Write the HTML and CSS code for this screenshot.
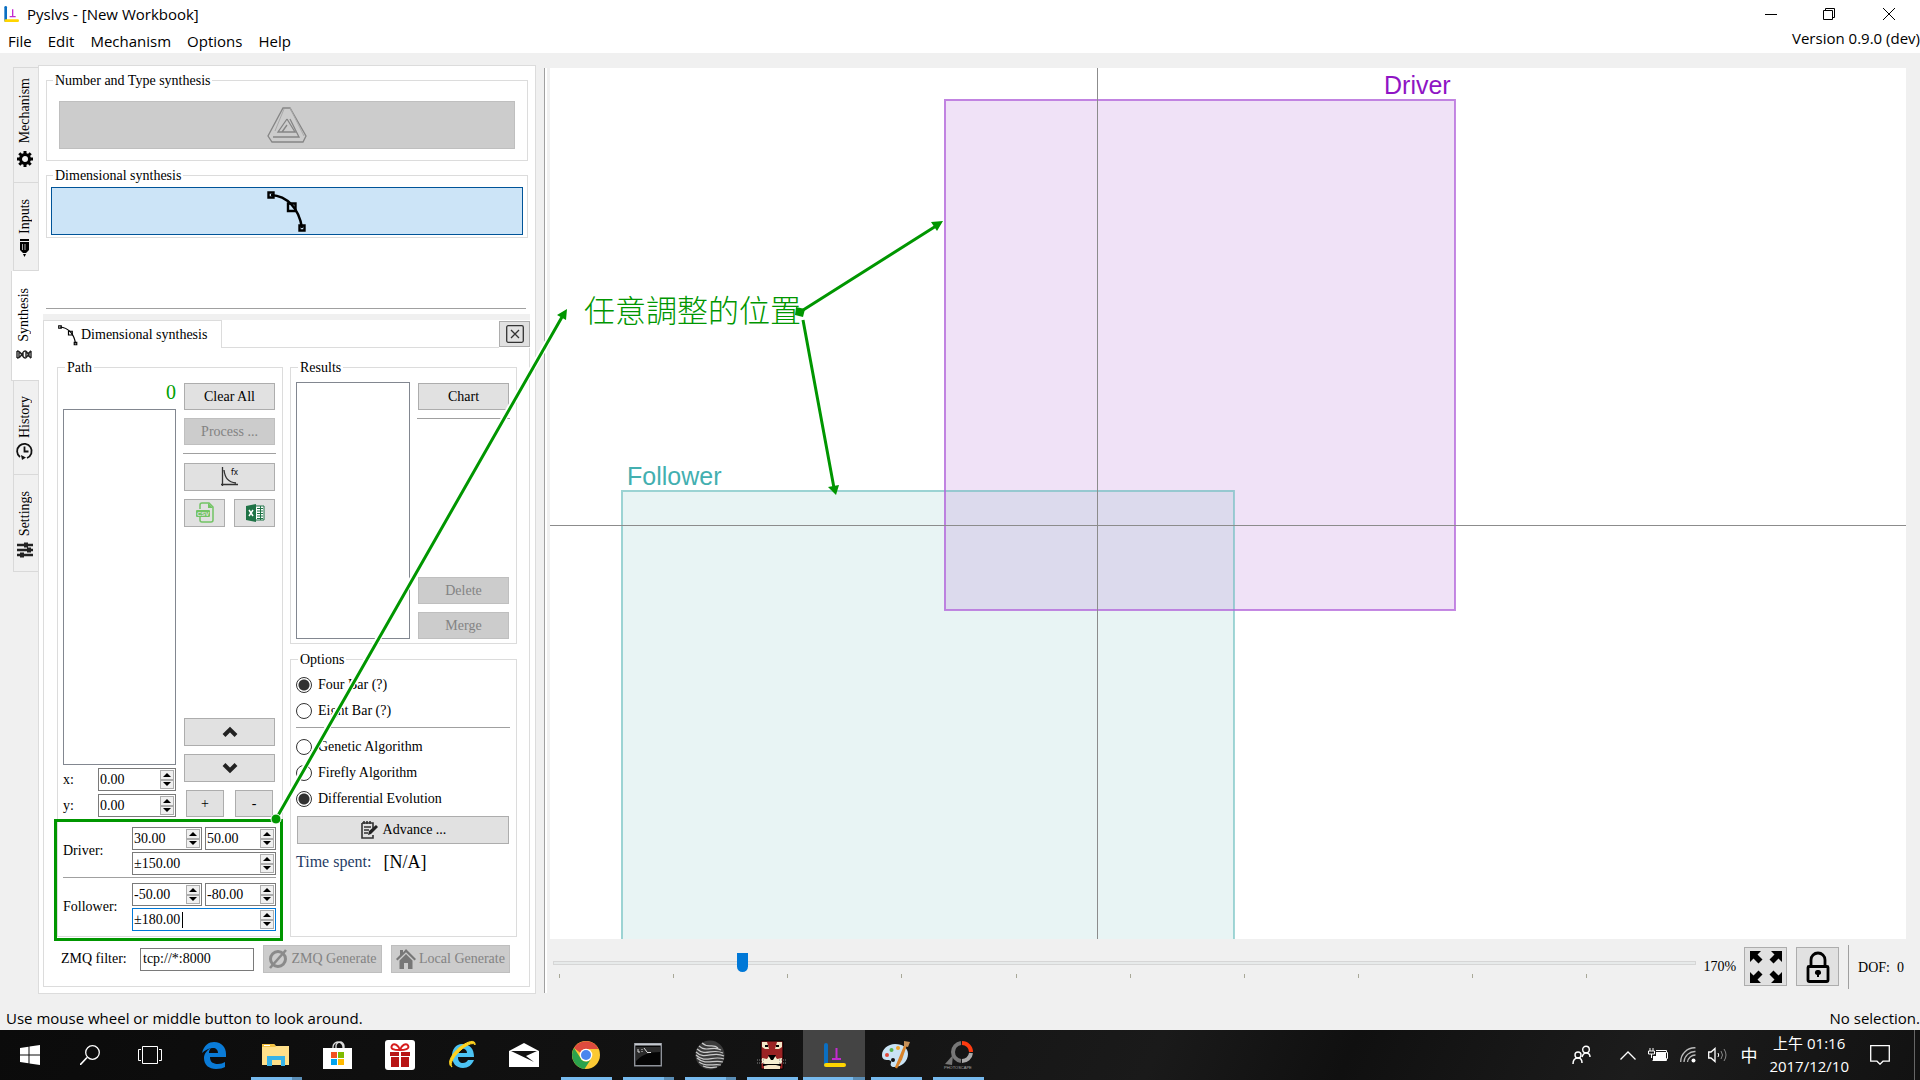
FILE: index.html
```html
<!DOCTYPE html>
<html lang="en">
<head>
<meta charset="utf-8">
<title>Pyslvs - [New Workbook]</title>
<link rel="stylesheet" href="styles.css">
</head>
<body>
<svg class="defs" aria-hidden="true">
  <symbol id="curve" viewBox="0 0 40 42">
    <path d="M4 5C20 6 32 18 35 38" fill="none" stroke="currentColor" stroke-width="2.4"/>
    <g fill="none" stroke="currentColor" stroke-width="2.4"><path d="M1.500 2.500h5v5h-5zM32.500 35.500h5v5h-5zM21 13.500h7.500v7.500h-7.500z"/></g>
  </symbol>
  <symbol id="pyslvs" viewBox="0 0 24 26">
    <path d="M4 3v20" stroke="#0b6fc2" stroke-width="4" stroke-linecap="round"/>
    <path d="M4 23h18" stroke="#ffd500" stroke-width="4" stroke-linecap="round"/>
    <path d="M14.500 6v10M10 17h9" stroke="#c32bd0" stroke-width="2"/>
  </symbol>
</svg>
<div class="app">
  <header class="titlebar">
    <svg class="app-icon" viewBox="0 0 24 26"><use href="#pyslvs"/></svg>
    <h1>Pyslvs - [New Workbook]</h1>
    <div class="window-buttons">
      <button aria-label="Minimize"><svg viewBox="0 0 12 12"><path d="M0 6.500h12"/></svg></button>
      <button aria-label="Restore"><svg viewBox="0 0 12 12"><path d="M.5 2.500h9v9h-9zM2.500 2.500v-2h9v9h-2"/></svg></button>
      <button aria-label="Close"><svg viewBox="0 0 12 12"><path d="M0 0l12 12M12 0L0 12"/></svg></button>
    </div>
  </header>
  <nav class="menubar">
    <button>File</button><button>Edit</button><button>Mechanism</button><button>Options</button><button>Help</button>
    <span class="version">Version 0.9.0 (dev)</span>
  </nav>

  <main class="workspace">
    <nav class="side-tabs">
      <button class="side-tab tab-mechanism"><span>Mechanism</span><svg viewBox="0 0 16 16"><circle cx="8" cy="8" r="4.500" fill="none" stroke="#000" stroke-width="3"/><path d="M8 0v3M8 13v3M0 8h3M13 8h3M2.300 2.300l2 2M11.700 11.700l2 2M13.700 2.300l-2 2M2.300 13.700l2-2" stroke="#000" stroke-width="3"/></svg></button>
      <button class="side-tab tab-inputs"><span>Inputs</span><svg viewBox="0 0 16 20"><path d="M3 1h9v2H3zM3 4h9v8l-3 3H6l-3-3z" fill="#000"/><path d="M5.500 6v6M8 6v6" stroke="#aaa"/><path d="M6 16h3l-1.500 3z" fill="#000"/></svg></button>
      <button class="side-tab tab-synthesis active"><span>Synthesis</span><svg viewBox="0 0 16 10"><path d="M1 1c5 0 5 7 8 7s4-7 6-7M1 8c5 0 5-7 8-7s4 7 6 7M1 1v7M3 2v5M7 3v3M10 2v5M13 2v5M15 1v7" fill="none" stroke="#222" stroke-width="1.400"/></svg></button>
      <button class="side-tab tab-history"><span>History</span><svg viewBox="0 0 18 18"><path d="M4 15a7.300 7.300 0 1 1 7 1M8.500 4.500v5h4" fill="none" stroke="#111" stroke-width="1.800"/><path d="M5 13l5 2.500-4 2.500z" fill="#111"/></svg></button>
      <button class="side-tab tab-settings"><span>Settings</span><svg viewBox="0 0 16 16"><path d="M0 3h16M0 8h16M0 13h16" stroke="#222" stroke-width="2.400"/><path d="M7 3h4M10 8h4M3 13h4" stroke="#222" stroke-width="5"/></svg></button>
    </nav>

    <section class="panel">
      <fieldset class="group">
        <legend>Number and Type synthesis</legend>
        <button class="btn big-btn inset" disabled aria-label="Number and Type synthesis">
          <svg class="penrose" viewBox="0 0 40 36"><path d="M16 1h7l16 28-3 6H5l-4-6zM20 12L11 25h17l-8-13M20 18l-5 7M23 12l9 18H6" fill="none" stroke="#858585" stroke-width="1.300"/><path d="M23 1l14 28M17 2L8 24" fill="none" stroke="#aaa"/></svg>
        </button>
      </fieldset>
      <fieldset class="group">
        <legend>Dimensional synthesis</legend>
        <button class="btn big-btn selected" aria-label="Dimensional synthesis"><svg class="curve-big"><use href="#curve"/></svg></button>
      </fieldset>
      <hr class="splitter-line">
      <div class="tab-widget">
        <div class="tab-header">
          <button class="page-tab"><svg class="curve-small"><use href="#curve"/></svg>Dimensional synthesis</button>
          <span class="tab-rule"></span>
          <button class="btn close-btn" aria-label="Close page"><svg viewBox="0 0 18 18"><rect x=".7" y=".7" width="16.600" height="16.600" rx="1.500"/><path d="M5 5l8 8M13 5l-8 8"/></svg></button>
        </div>
        <div class="page">
          <div class="columns">
            <fieldset class="group path">
              <legend>Path</legend>
              <div class="path-top">
                <div class="path-left">
                  <output class="count">0</output>
                  <div class="list" role="listbox" aria-label="Path points"></div>
                  <div class="coord"><label for="px">x:</label><div class="spin"><input id="px" value="0.00"><button aria-label="Up"></button><button aria-label="Down"></button></div></div>
                  <div class="coord"><label for="py">y:</label><div class="spin"><input id="py" value="0.00"><button aria-label="Up"></button><button aria-label="Down"></button></div></div>
                </div>
                <div class="path-right">
                  <button class="btn">Clear All</button>
                  <button class="btn" disabled>Process ...</button>
                  <hr>
                  <button class="btn tall" aria-label="Path from expression"><svg width="20" height="22" viewBox="0 0 20 22"><path d="M2.500 1v19M1 18.500h17M4 4c1 8 4 12 12 13" fill="none" stroke="#333" stroke-width="1.300"/><text x="11" y="9" class="fx">fx</text></svg></button>
                  <div class="pair">
                    <button class="btn tall" aria-label="Import CSV"><svg width="20" height="22" viewBox="0 0 20 22"><path d="M5 7V3q0-2 2-2h7l4 4v13q0 2-2 2H7q-2 0-2-2v-3" fill="none" stroke="#72c464" stroke-width="1.500"/><path d="M13 1v5h5z" fill="#72c464"/><rect x="1" y="8" width="14" height="7" rx="1" fill="#72c464"/><text x="2" y="14" class="csv">CSV</text></svg></button>
                    <button class="btn tall" aria-label="Import Excel"><svg width="20" height="20" viewBox="0 0 20 20"><path d="M11 3h8v14h-8" fill="#fff" stroke="#1f7346"/><path d="M12 5.500h6M12 8h6M12 10.500h6M12 13h6M12 15.500h6M15.500 3v14" stroke="#1f7346"/><path d="M1 3l10-2v18L1 17z" fill="#1f7346"/><path d="M4 7l4 6M8 7l-4 6" stroke="#fff" stroke-width="1.500"/></svg></button>
                  </div>
                  <span class="spacer"></span>
                  <button class="btn tall" aria-label="Move up"><svg width="16" height="12" viewBox="0 0 16 12"><path d="M2 9.500l6-6 6 6" fill="none" stroke="#222" stroke-width="4"/></svg></button>
                  <button class="btn tall" aria-label="Move down"><svg width="16" height="12" viewBox="0 0 16 12"><path d="M2 2.500l6 6 6-6" fill="none" stroke="#222" stroke-width="4"/></svg></button>
                  <div class="pair small"><button class="btn">+</button><button class="btn">-</button></div>
                </div>
              </div>
              <div class="range">
                <label for="dx">Driver:</label>
                <div class="spins">
                  <div class="spin"><input id="dx" value="30.00"><button aria-label="Up"></button><button aria-label="Down"></button></div>
                  <div class="spin"><input aria-label="Driver y" value="50.00"><button aria-label="Up"></button><button aria-label="Down"></button></div>
                  <div class="spin wide"><input aria-label="Driver range" value="±150.00"><button aria-label="Up"></button><button aria-label="Down"></button></div>
                </div>
              </div>
              <hr class="range-rule">
              <div class="range">
                <label for="fx">Follower:</label>
                <div class="spins">
                  <div class="spin"><input id="fx" value="-50.00"><button aria-label="Up"></button><button aria-label="Down"></button></div>
                  <div class="spin"><input aria-label="Follower y" value="-80.00"><button aria-label="Up"></button><button aria-label="Down"></button></div>
                  <div class="spin wide focus"><input aria-label="Follower range" value="±180.00"><button aria-label="Up"></button><button aria-label="Down"></button><i class="caret"></i></div>
                </div>
              </div>
            </fieldset>

            <div class="right-groups">
              <fieldset class="group results">
                <legend>Results</legend>
                <div class="results-body">
                  <div class="list" role="listbox" aria-label="Results"></div>
                  <div class="results-buttons">
                    <button class="btn">Chart</button>
                    <hr>
                    <span class="spacer"></span>
                    <button class="btn" disabled>Delete</button>
                    <button class="btn" disabled>Merge</button>
                  </div>
                </div>
              </fieldset>
              <fieldset class="group options">
                <legend>Options</legend>
                <div class="options-body">
                  <label class="radio"><input type="radio" name="bar" checked>Four Bar (?)</label>
                  <label class="radio"><input type="radio" name="bar">Eight Bar (?)</label>
                  <hr>
                  <label class="radio"><input type="radio" name="alg">Genetic Algorithm</label>
                  <label class="radio"><input type="radio" name="alg">Firefly Algorithm</label>
                  <label class="radio"><input type="radio" name="alg" checked>Differential Evolution</label>
                  <button class="btn tall advance"><svg width="18" height="20" viewBox="0 0 18 20"><path d="M2 3h11v5M13 15v3H2V3M4 1v3M7 1v3M10 1v3M4 7h7M4 10h5M4 13h4" fill="none" stroke="#333" stroke-width="1.600"/><path d="M8 15l1-4 7-6 2 2-7 7z" fill="#222"/></svg>Advance ...</button>
                  <p class="time"><span>Time spent:</span><output>[N/A]</output></p>
                </div>
              </fieldset>
            </div>
          </div>
          <div class="generate">
            <label for="zmq">ZMQ filter:</label>
            <input id="zmq" class="field" value="tcp://*:8000">
            <button class="btn tall" disabled><svg width="20" height="20" viewBox="0 0 20 20"><circle cx="10" cy="10" r="7.500" fill="none" stroke="#8a8a8a" stroke-width="3"/><path d="M2 19L18 1" stroke="#8a8a8a" stroke-width="2.600"/></svg>ZMQ Generate</button>
            <button class="btn tall" disabled><svg width="20" height="20" viewBox="0 0 20 20"><path d="M10 0l10 10-1.500 1.500L10 3.200 1.500 11.500 0 10l4-4V1h3v2.500z" fill="#777"/><path d="M3.500 11.500L10 5l6.500 6.500V20H12v-6H8v6H3.500z" fill="#777"/></svg>Local Generate</button>
          </div>
        </div>
      </div>
    </section>

    <div class="splitter"></div>

    <section class="view">
      <svg class="canvas" role="img" aria-label="Mechanism canvas">
        <rect x="394" y="31" width="511" height="511" fill="#f0e2f7"/>
        <rect x="71" y="422" width="613" height="613" fill="#e8f4f4"/>
        <rect x="394" y="422" width="290" height="120" fill="#dcdaed"/>
        <rect x="72" y="423" width="612" height="613" fill="none" stroke="#67bcbc" stroke-opacity=".6" stroke-width="2"/>
        <rect x="395" y="32" width="510" height="510" fill="none" stroke="#b163da" stroke-opacity=".75" stroke-width="2"/>
        <line x1="547.500" y1="0" x2="547.500" y2="100%" stroke="#8c8c8c"/>
        <line x1="0" y1="457.500" x2="100%" y2="457.500" stroke="#8c8c8c"/>
        <text x="77" y="417" class="tag follower">Follower</text>
        <text x="834" y="26" class="tag driver">Driver</text>
      </svg>
      <div class="zoom-bar">
        <div class="slider">
          <input type="range" min="0" max="1000" value="162" aria-label="Zoom">
          <div class="ticks"><i></i><i></i><i></i><i></i><i></i><i></i><i></i><i></i><i></i><i></i></div>
        </div>
        <span class="percent">170%</span>
        <button class="btn tool" aria-label="Zoom to fit"><svg width="32" height="32" viewBox="0 0 32 32"><path d="M0 0h11L7.500 3.500l5 5-4 4-5-5L0 11z"/><path d="M32 0v11l-3.500-3.500-5 5-4-4 5-5L21 0zM0 32V21l3.500 3.500 5-5 4 4-5 5L11 32zM32 32H21l3.500-3.500-5-5 4-4 5 5L32 21z"/></svg></button>
        <button class="btn tool" aria-label="Lock"><svg width="24" height="32" viewBox="0 0 24 32"><path d="M5 15V9a7 7 0 0 1 14 0v6M3 15.500h18q1 0 1 1V29q0 1.500-1.500 1.500h-17Q2 30.500 2 29V16.500q0-1 1-1z" fill="none" stroke="#000" stroke-width="2.800"/><path d="M12 19a2.500 2.500 0 0 1 1 5v2h-2v-2a2.500 2.500 0 0 1 1-5z"/></svg></button>
        <span class="dof">DOF:&nbsp; 0</span>
      </div>
    </section>
  </main>

  <footer class="statusbar"><span>Use mouse wheel or middle button to look around.</span><span>No selection.</span></footer>

  <svg class="annotations" aria-hidden="true">
    <rect x="55.500" y="820.500" width="226" height="119" fill="none" stroke="#009600" stroke-width="3"/>
    <g fill="none" stroke="#fff" stroke-width="6"><path d="M277 816L564 313M804 310l135-86M803 321l31 169"/></g>
    <g fill="none" stroke="#009600" stroke-width="3"><path d="M276 819L562 317M800 312l136-86M803 320l31 168"/></g>
    <circle cx="276" cy="819" r="5" fill="#009600" stroke="#fff"/>
    <g fill="#009600"><path d="M567 309l-1 11-9-5zM943 221l-6 10-6-9zM836 495l-8-8 11-2zM796 307l9 2-2 8-8-2z"/></g>
    <text x="584" y="322" class="note">任意調整的位置</text>
  </svg>
</div>

<nav class="taskbar">
  <button class="task" aria-label="Start"><svg width="20" height="20" viewBox="0 0 20 20"><path d="M0 3l8.500-1.200v7.700H0zM9.500 1.600L20 0v9.500H9.500zM0 10.500h8.500v7.700L0 17zM9.500 10.500H20V20L9.500 18.400z" fill="#fff"/></svg></button>
  <button class="task" aria-label="Search"><svg width="20" height="20" viewBox="0 0 20 20"><path d="M0 20l7-7.500" stroke="#fff" stroke-width="1.600"/><circle cx="12.500" cy="7.500" r="6.800" fill="none" stroke="#fff" stroke-width="1.300"/></svg></button>
  <button class="task task-view" aria-label="Task view"><svg width="24" height="18" viewBox="0 0 24 18"><path d="M4.500.5h15v17h-15zM3 3.500H.5v11H3M21 3.500h2.500v11H21" fill="none" stroke="#fff"/></svg></button>
  <button class="task app-task" aria-label="Edge"><svg width="26" height="28" viewBox="0 0 26 28"><path d="M1 12C3 4 8 1 13 1c8 0 12 6 12 12v3H9c0 5 3 7 8 7 3 0 5-1 7-2v5c-2 1-5 2-9 2C8 28 3 24 3 17c0-4 3-8 7-10-2 2-2 4-2 5h9c0-3-2-5-5-5-4 0-8 2-11 5z" fill="#0a7bd7"/></svg></button>
  <button class="task app-task open multi" aria-label="File Explorer"><svg width="28" height="24" viewBox="0 0 28 24"><path d="M0 1h12l2 2h13v19H0z" fill="#ffe08a"/><path d="M0 1h12l2 3H0z" fill="#f3c242"/><path d="M2 2h6v1H2z" fill="#fff"/><path d="M5 23V13h18v10h-4v-6h-9v6z" fill="#37b3e8"/></svg></button>
  <button class="task app-task" aria-label="Store"><svg width="30" height="28" viewBox="0 0 30 28"><path d="M10 8V6a5 5 0 0 1 10 0v2M13 8V5a4 4 0 0 1 8 0v3" fill="none" stroke="#ddd" stroke-width="1.300"/><path d="M0 7h29v21H0z" fill="#fff"/><path d="M8 11h6v6H8z" fill="#f25022"/><path d="M15 11h6v6h-6z" fill="#7fba00"/><path d="M8 18h6v6H8z" fill="#00a4ef"/><path d="M15 18h6v6h-6z" fill="#ffb900"/></svg></button>
  <button class="task app-task" aria-label="Gifts"><svg width="30" height="30" viewBox="0 0 30 30"><rect width="30" height="30" rx="3" fill="#fff"/><path d="M5 12h9v4H5zM16 12h9v4h-9zM6 17h8v10H6zM16 17h8v10h-8z" fill="#b81414"/><path d="M14.500 10C9 10 5 9 7 5.500S14 6 15 10c1-4 6-8 8-4.500S20 10 14.500 10z" fill="none" stroke="#d61c1c" stroke-width="2"/></svg></button>
  <button class="task app-task" aria-label="Internet Explorer"><svg width="30" height="30" viewBox="0 0 30 30"><path d="M15 4c8 0 12 5 12 13H11c0 4 2 6 5 6 2 0 4-1 5-3h6c-2 5-6 8-11 8C9 28 5 23 5 16S9 4 15 4zm0 4.500c-2 0-4 2-4 4.500h9c0-3-2-4.500-5-4.500z" fill="#4cc3f3"/><path d="M5 27C-1 24 5 13 13 7 21 1 29-1 28 5c-1-3-7-1-13 4C8 15 2 23 5 27z" fill="#ffd21f" stroke="#ffd21f"/></svg></button>
  <button class="task app-task" aria-label="Mail"><svg width="30" height="24" viewBox="0 0 30 24"><path d="M0 8L15 0l15 8v16H0z" fill="#fff"/><path d="M2 8h26l-11 5 8 6z" fill="#111"/></svg></button>
  <button class="task app-task open" aria-label="Chrome"><svg width="28" height="28" viewBox="0 0 28 28"><circle cx="14" cy="14" r="14" fill="#fbc934"/><path d="M2 7a14 14 0 0 1 24.500 1H14a6 6 0 0 0-5.500 4z" fill="#dd4b3e"/><path d="M2 7a14 14 0 0 0 10.500 21L19 18a6 6 0 0 1-10.500-1z" fill="#2ba24c"/><circle cx="14" cy="14" r="6.300" fill="#fff"/><circle cx="14" cy="14" r="5" fill="#4a86ee"/></svg></button>
  <button class="task app-task open multi" aria-label="Command Prompt"><svg width="28" height="24" viewBox="0 0 28 24"><path d="M.7.700h26.600v22H.7z" fill="#050505" stroke="#8e9299" stroke-width="1.400"/><path d="M1 1.500h26" stroke="#c4c8ce" stroke-width="2"/><path d="M2 4h24v5C14 9 8 12 2 18z" fill="#2b2b2b"/><path d="M4 6v3h2M8 6v1M8 8v1M10 5l3 4M13 9.500h4" fill="none" stroke="#ddd"/></svg></button>
  <button class="task app-task open multi" aria-label="Sphere"><svg width="30" height="30" viewBox="0 0 30 30"><circle cx="15" cy="15" r="14.500" fill="#3b3b3b"/><path d="M7 3c6 6 11 0 16 5M4 6c8 7 14-1 22 4M2 9c9 8 15-1 26 4M1 12c9 9 17-2 28 4M1 15c9 9 17 0 28 4M2 18c9 8 17 1 26 4M4 22c8 6 15 1 22 3M8 26c6 3 10 1 14 1" fill="none" stroke="#c9c9c9" stroke-width="1.200"/></svg></button>
  <button class="task app-task open" aria-label="Big cat"><svg width="30" height="30" viewBox="0 0 30 30"><path d="M4 1h22v28H4z" fill="#9b2324" stroke="#000"/><path d="M5 2h5l2 7H8L5 7zM25 2h-5l-2 7h4l3-2z" fill="#f4e6c8"/><path d="M8 6h3M19 6h3" stroke="#000" stroke-width="2"/><path d="M12 16h6l2 3 5-1v5l-6 2h-8l-6-2v-5l5 1z" fill="#f5efd2"/><path d="M11 15h8l-3 5h-2zM6 24h18v2H6z" fill="#000"/><path d="M7 26l4-1h8l4 1v3H7z" fill="#f4e6c8"/><path d="M0 20h8M0 23h8M22 20h8M22 23h8" stroke="#888" stroke-dasharray="1 1"/></svg></button>
  <button class="task app-task open active multi" aria-label="Pyslvs"><svg width="24" height="26"><use href="#pyslvs"/></svg></button>
  <button class="task app-task open" aria-label="Paint"><svg width="30" height="30" viewBox="0 0 30 30"><path d="M14 4c8 0 13 4 13 10 0 7-6 13-14 13-3 0-4-2-3-4s-1-3-3-3c-4 0-6-1-6-5C1 9 7 4 14 4z" fill="#c9e3f5"/><circle cx="6" cy="15" r="2" fill="#e0473a"/><circle cx="10.500" cy="10" r="2" fill="#54b04a"/><circle cx="17" cy="8" r="2" fill="#f0a52c"/><circle cx="12" cy="20" r="2" fill="#111"/><path d="M25 4L15 28l5-9z" stroke="#d8832b" stroke-width="2.400"/><path d="M23 1l6 1-2 5-4-1z" fill="#c69058"/></svg></button>
  <button class="task app-task open" aria-label="PhotoScape"><svg width="30" height="30" viewBox="0 0 30 30"><path d="M19 3a9 9 0 0 1 9 9" fill="none" stroke="#ff3b10" stroke-width="4"/><path d="M28 13a9 9 0 0 1-9 8" fill="none" stroke="#aaa" stroke-width="4"/><path d="M18 21a9 9 0 0 1-8-9 9 9 0 0 1 8-9" fill="none" stroke="#777" stroke-width="4"/><path d="M10 15L2 24l7 1z" fill="#777"/><text x="1" y="29" class="ps">PHOTOSCAPE</text></svg></button>
  <div class="tray">
    <button aria-label="People"><svg width="20" height="20" viewBox="0 0 20 20"><path d="M1 19c0-5 3-6 5-6s4 1 4 5M10 12c1-3 2-4 4-4s4 1 4 4" fill="none" stroke="#fff" stroke-width="1.500"/><circle cx="6" cy="10" r="3" fill="none" stroke="#fff" stroke-width="1.400"/><circle cx="14" cy="4.500" r="3.300" fill="none" stroke="#fff" stroke-width="1.400"/></svg></button>
    <button aria-label="Show hidden icons"><svg width="16" height="9" viewBox="0 0 16 9"><path d="M.5 8.500L8 1l7.500 7.500" fill="none" stroke="#fff" stroke-width="1.300"/></svg></button>
    <button aria-label="Battery"><svg width="20" height="14" viewBox="0 0 20 14"><path d="M2 0v3M5 0v3M.5 3h6v3h-6zM3.500 6v4" fill="none" stroke="#fff"/><path d="M8 4h10v8H5v-4h3z" fill="#fff"/><path d="M8 2.500h10.500v2h1v6h-1v2H4.500" fill="none" stroke="#fff"/></svg></button>
    <button aria-label="Network"><svg width="16" height="16" viewBox="0 0 16 16"><path d="M.7 15A14 14 0 0 1 15.500.8M4 15A11 11 0 0 1 15.500 4.500M7.500 15a8 8 0 0 1 8-7" fill="none" stroke="#bbb" stroke-width="1.300"/><circle cx="13.500" cy="13.500" r="2" fill="#fff"/></svg></button>
    <button aria-label="Volume"><svg width="20" height="16" viewBox="0 0 20 16"><path d="M.7 5H3l4-3.500v13L3 11H.7z" fill="none" stroke="#fff" stroke-width="1.300"/><path d="M10 6q1.500 2 0 4" fill="none" stroke="#fff"/><path d="M13 4q3 4 0 8M16 2q4 6 0 12" fill="none" stroke="#888"/></svg></button>
    <button class="ime">中</button>
    <button class="clock"><span>上午 01:16</span><span>2017/12/10</span></button>
    <button aria-label="Notifications"><svg width="20" height="20" viewBox="0 0 20 20"><path d="M.7.700h18.600v15.500H13l-3 3-3-3H.7z" fill="none" stroke="#fff" stroke-width="1.300"/></svg></button>
  </div>
  <button class="show-desktop" aria-label="Show desktop"></button>
</nav>
</body>
</html>
```
FILE: styles.css
```css
* { box-sizing: border-box; }
body {
  margin: 0;
  min-height: 100vh;
  display: flex;
  flex-direction: column;
  background: #f0f0f0;
  color: #000;
  font: 14px/16px "Liberation Serif", "Noto Sans CJK TC", serif;
}
button, input { font: inherit; color: inherit; margin: 0; }
button { background: none; border: 0; padding: 0; }
hr { border: 0; margin: 0; height: 1px; width: 100%; background: #a0a0a0; flex: none; }
svg { display: block; flex: none; }
.defs { position: absolute; width: 0; height: 0; }
.spacer { flex: 1; }

.app { position: relative; flex: 1; display: flex; flex-direction: column; }
.titlebar, .menubar, .statusbar { font: 15px/20px "Open Sans", "Noto Sans CJK TC", sans-serif; }
.titlebar { display: flex; align-items: center; height: 30px; padding: 0 0 2px 3px; background: #fff; }
.titlebar h1 { margin: 0 0 0 8px; font: inherit; flex: 1; }
.app-icon { width: 16px; height: 18px; }
.window-buttons { display: flex; }
.window-buttons button { width: 58px; display: flex; justify-content: center; }
.window-buttons button:last-child { width: 62px; }
.window-buttons svg { width: 12px; height: 12px; fill: none; stroke: #000; }
.menubar { display: flex; align-items: center; gap: 16px; height: 23px; padding: 0 0 2px 8px; background: #fff; }
.version { margin-left: auto; align-self: flex-start; line-height: 17px; }

.workspace { flex: 1; display: flex; padding: 12px 14px 12px 11px; }
.side-tabs { width: 27px; margin-top: 2px; display: flex; flex-direction: column; }
.side-tab {
  display: flex; flex-direction: column; align-items: center; justify-content: flex-end; gap: 8px;
  margin-left: 2px; padding: 0 3px 15px 0;
  border: 1px solid #d9d9d9; border-right: 0; border-top: 0;
}
.side-tab span { writing-mode: vertical-rl; transform: rotate(180deg); }
.side-tab svg { width: 16px; height: 16px; }
.tab-mechanism { height: 116px; border-top: 1px solid #d9d9d9; }
.tab-inputs { height: 88px; padding-bottom: 12px; gap: 4px; }
.tab-inputs svg { height: 20px; }
.tab-synthesis { height: 110px; padding-bottom: 20px; }
.tab-synthesis svg { height: 10px; }
.tab-history { height: 94px; padding-bottom: 14px; gap: 4px; }
.tab-history svg { width: 18px; height: 18px; }
.tab-settings { height: 97px; padding-bottom: 13px; gap: 6px; }
.side-tab.active { position: relative; margin-left: 0; width: 28px; background: #fff; z-index: 1; }

.panel {
  width: 498px; padding: 5px 4px 6px; background: #fff; border: 1px solid #dcdcdc;
  display: flex; flex-direction: column;
}
.group { min-width: 0; margin: 0 3px 5px; padding: 3px 4px 2px; border: 1px solid #dcdcdc; }
.group legend { margin-left: 2px; padding: 2px 2px 0; line-height: 16px; }
.btn {
  height: 27px; border: 1px solid #adadad; background: #e1e1e1;
  display: flex; align-items: center; justify-content: center; gap: 5px; white-space: nowrap;
}
.btn:disabled { background: #ccc; border-color: #bfbfbf; color: #838383; }
.tall { height: 28px; }
.big-btn { width: 100%; height: 48px; }
.big-btn.inset { width: calc(100% - 16px); margin: 9px 8px; }
.selected { background: #cce4f7; border-color: #005499; }
.penrose { width: 40px; height: 36px; }
.curve-big { width: 40px; height: 42px; }
.curve-small { width: 20px; height: 22px; }
.splitter-line { width: auto; margin: 65px 5px 5px 3px; }

.tab-widget { flex: 1; display: flex; flex-direction: column; border-top: 6px solid #f0f0f0; margin-right: 1px; }
.tab-header { display: flex; height: 28px; }
.page-tab {
  width: 179px; display: flex; align-items: center; gap: 3px; padding-left: 14px;
  border: 1px solid #dcdcdc; border-bottom: 0;
}
.tab-rule { flex: 1; border-bottom: 1px solid #dcdcdc; }
.close-btn { width: 31px; height: 26px; margin-top: 1px; }
.close-btn svg { width: 18px; height: 18px; fill: none; stroke: #333; stroke-width: 1.300; }
.page {
  flex: 1; display: flex; flex-direction: column; gap: 8px;
  padding: 10px 12px 13px 13px; border: 1px solid #dcdcdc; border-top: 0;
}
.columns { flex: 1; display: flex; gap: 7px; }
.columns .group { margin: 0; padding: 6px 6px 5px 5px; display: flex; flex-direction: column; }
.path { width: 226px; }
.path-top { flex: 1; display: flex; gap: 7px; }
.path-left { width: 113px; display: flex; flex-direction: column; gap: 3px; }
.path-right, .results-buttons { flex: 1; display: flex; flex-direction: column; gap: 8px; padding: 1px 1px 0; }
.path-right hr, .results-buttons hr { width: auto; height: 2px; margin: 0 -1px; background: linear-gradient(#a0a0a0 50%, #fff 50%); }
.count { height: 24px; text-align: right; color: #00a000; font-size: 20px; line-height: 20px; }
.list { flex: 1; border: 1px solid #828790; background: #fff; }
.pair { display: flex; gap: 9px; }
.pair .btn { flex: 1; }
.pair.small { gap: 11px; padding: 0 2px; }
.fx { font: 8px "Noto Sans", sans-serif; }
.csv { font: bold 6px "Liberation Sans", sans-serif; fill: #e1e1e1; }
.coord { display: flex; align-items: center; }
.coord label { width: 35px; }
.coord .spin { flex: 1; }
.spin {
  position: relative; height: 23px; padding: 1px; border: 1px solid #7a7a7a; background: #fff;
  display: grid; grid-template: 1fr 1fr / 1fr 14px; min-width: 0;
}
.spin input { grid-row: 1 / 3; min-width: 0; width: 100%; border: 0; padding: 0; background: none; outline: 0; }
.spin button { border: 1px solid #adadad; background: #f0f0f0; display: flex; align-items: center; justify-content: center; }
.spin button::before { content: ""; border: 4px solid transparent; border-top-width: 0; border-bottom: 4px solid #000; }
.spin button:nth-of-type(2)::before { border-bottom-width: 0; border-top: 4px solid #000; border-bottom-color: transparent; }
.focus { border-color: #0078d7; }
.caret { position: absolute; left: 49px; top: 3px; width: 1px; height: 16px; background: #000; }
.range { display: flex; align-items: center; }
.path-top + .range { margin-top: 10px; }
.range label { width: 69px; }
.spins { flex: 1; display: grid; grid-template-columns: 70px 1fr; gap: 2px 3px; }
.wide { grid-column: 1 / 3; }
.range-rule { margin: 2px 0 5px; }
.right-groups { flex: 1; display: flex; flex-direction: column; gap: 6px; }
.columns .results { padding-bottom: 4px; }
.results-body { height: 257px; display: flex; gap: 7px; }
.results-body .list { width: 114px; flex: none; }
.options { flex: 1; }
.options-body { display: flex; flex-direction: column; }
.radio { display: flex; align-items: center; gap: 6px; height: 26px; }
.options-body hr { margin: 3px 0 6px; }
.options-body .radio:first-child { margin-top: -2px; }
.radio input {
  appearance: none; width: 16px; height: 16px; border: 1px solid #333; border-radius: 50%; background: #fff;
}
.radio input:checked { background: radial-gradient(circle, #333 5px, #fff 6px); }
.advance { margin: 4px 1px 0; }
.time { display: flex; gap: 12px; align-items: center; margin: 8px 0; line-height: 20px; font-size: 16px; }
.time span { color: #1f3d66; }
.time output { font-size: 18px; }
.generate { display: flex; align-items: center; margin: 0 7px 0 4px; gap: 9px; }
.generate label { width: 70px; }
.generate .btn { flex: 1; gap: 3px; }
.field { width: 114px; height: 23px; border: 1px solid #7a7a7a; padding: 0 2px; background: #fff; }

.splitter { width: 3px; margin: 3px 3px 1px 8px; background: linear-gradient(90deg, #a0a0a0 33%, #fff 33%); }
.view { flex: 1; display: flex; flex-direction: column; margin-top: 3px; }
.canvas { flex: 1; width: 100%; min-height: 0; background: #fff; overflow: hidden; }
.tag { font: 25px "Liberation Sans", sans-serif; }
.follower { fill: #43afb0; }
.driver { fill: #8f14c4; }
.zoom-bar { height: 55px; display: flex; align-items: center; padding-left: 3px; }
.slider { flex: 1; height: 28px; }
.slider input { display: block; width: 100%; height: 20px; appearance: none; background: none; }
.slider input::-webkit-slider-runnable-track { height: 4px; border: 1px solid #d6d6d6; background: #e7eaea; }
.slider input::-webkit-slider-thumb {
  appearance: none; width: 11px; height: 19px; margin-top: -9px; background: #0078d7; border-radius: 0 0 6px 6px;
}
.ticks { display: grid; grid-template-columns: repeat(10, 1fr); height: 4px; margin: 1px -4px 0 6px; }
.ticks i { border-left: 1px solid #a8a898; }
.percent { margin: 0 8px 0 7px; }
.tool { width: 43px; height: 39px; margin-right: 9px; }
.dof { height: 44px; line-height: 46px; padding: 0 2px 0 9px; border-left: 1px solid #a0a0a0; }

.statusbar { display: flex; justify-content: space-between; height: 24px; padding-left: 6px; line-height: 24px; }
.annotations { position: absolute; inset: 0; width: 100%; height: 100%; pointer-events: none; }
.note { font: 300 31px "Noto Sans CJK TC", sans-serif; fill: #009600; }

.taskbar {
  height: 50px; display: flex; color: #fff;
  background: linear-gradient(115deg, #0b0b0b, #141414 45%, #1a1a1a 60%, #101010 70%, #1c1c1c 85%, #121212);
}
.task { width: 60px; height: 50px; display: flex; align-items: center; justify-content: center; color: #fff; }
.app-task { width: 62px; position: relative; }
.task-view { margin-right: 3px; }
.open::after { content: ""; position: absolute; left: 6px; right: 5px; bottom: 0; height: 3px; background: #76b9ed; }
.multi::after { background: linear-gradient(90deg, #76b9ed 80%, #5a8db5 80%); }
.app-task.active { background: #444; }
.active.app-task::after { left: 0; right: 0; }
.ps { font: 4px "Liberation Sans", sans-serif; fill: #aaa; }
.tray { margin-left: auto; display: flex; align-items: center; gap: 12px; padding-right: 24px; }
.tray button { color: #fff; }
.tray button:first-child { margin-right: 16px; }
.ime { font: 17px/20px "Noto Sans CJK TC", sans-serif; }
.tray .clock {
  display: flex; flex-direction: column; align-items: center; margin-right: 9px;
  font: 15px/23px "Open Sans", "Noto Sans CJK TC", sans-serif;
}
.show-desktop { width: 6px; border-left: 1px solid #666; }
```
